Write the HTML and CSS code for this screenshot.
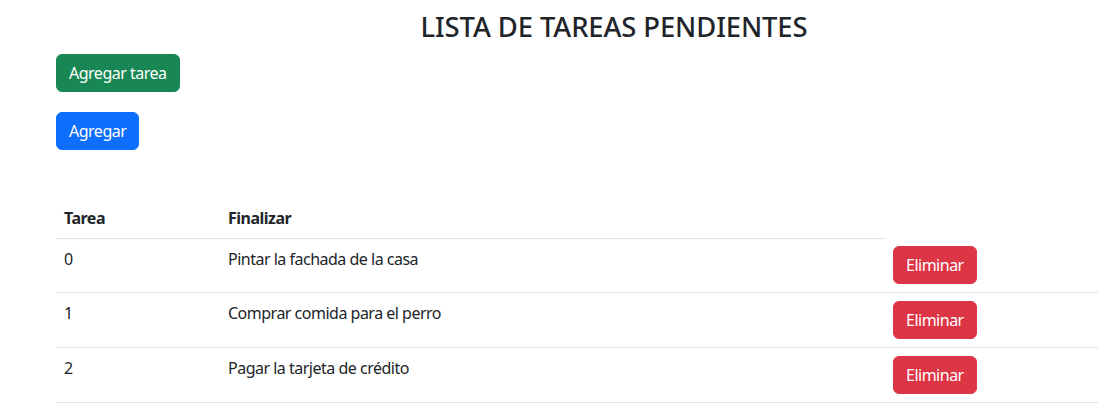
FILE: index.html
```html
<!DOCTYPE html>
<html lang="es">
<head>
<meta charset="utf-8">
<title>Lista de tareas</title>
<link rel="stylesheet" href="styles.css">
</head>
<body>
<div class="page">
  <h3 class="title">LISTA DE TAREAS PENDIENTES</h3>
  <div class="actions">
    <button class="btn btn-success">Agregar tarea</button>
    <button class="btn btn-primary">Agregar</button>
  </div>
  <table class="tasks">
    <colgroup>
      <col class="c1"><col class="c2"><col class="c3">
    </colgroup>
    <thead>
      <tr><th>Tarea</th><th>Finalizar</th></tr>
    </thead>
    <tbody>
      <tr><td>0</td><td>Pintar la fachada de la casa</td><td><button class="btn btn-danger">Eliminar</button></td></tr>
      <tr><td>1</td><td>Comprar comida para el perro</td><td><button class="btn btn-danger">Eliminar</button></td></tr>
      <tr><td>2</td><td>Pagar la tarjeta de crédito</td><td><button class="btn btn-danger">Eliminar</button></td></tr>
    </tbody>
  </table>
</div>
</body>
</html>
```
FILE: styles.css
```css
html, body {
  margin: 0;
  padding: 0;
  background: #fff;
}
body {
  font-family: "Noto Sans", "Open Sans", sans-serif;
  font-size: 16px;
  line-height: 1.5;
  color: #212529;
  letter-spacing: -0.5px;
  overflow: hidden;
}
.page {
  padding-left: 56px;
}
.title {
  margin: 0;
  padding: 11px 0 0 74px;
  text-align: center;
  font-size: 27.4px;
  font-weight: 500;
  line-height: 1.2;
  letter-spacing: -0.1px;
}
.actions {
  display: flex;
  flex-direction: column;
  align-items: flex-start;
  gap: 20px;
  margin-top: 10px;
}
.btn {
  font-family: inherit;
  font-size: 16px;
  line-height: 24px;
  letter-spacing: -0.5px;
  padding: 6px 12px;
  border: 1px solid transparent;
  border-radius: 6px;
  color: #fff;
  cursor: pointer;
}
.btn-success { background: #198754; border-color: #198754; }
.btn-primary { background: #0d6efd; border-color: #0d6efd; }
.btn-danger { background: #dc3545; border-color: #dc3545; }
.tasks {
  margin-top: 48px;
  width: 1042px;
  border-collapse: collapse;
  table-layout: fixed;
}
.c1 { width: 164px; }
.c2 { width: 665px; }
.tasks th, .tasks td {
  padding: 8px;
  text-align: left;
  vertical-align: top;
  border-bottom: 1px solid #dee2e6;
}
.tasks th {
  font-weight: 700;
}
.tasks td .btn {
  display: block;
}
```
